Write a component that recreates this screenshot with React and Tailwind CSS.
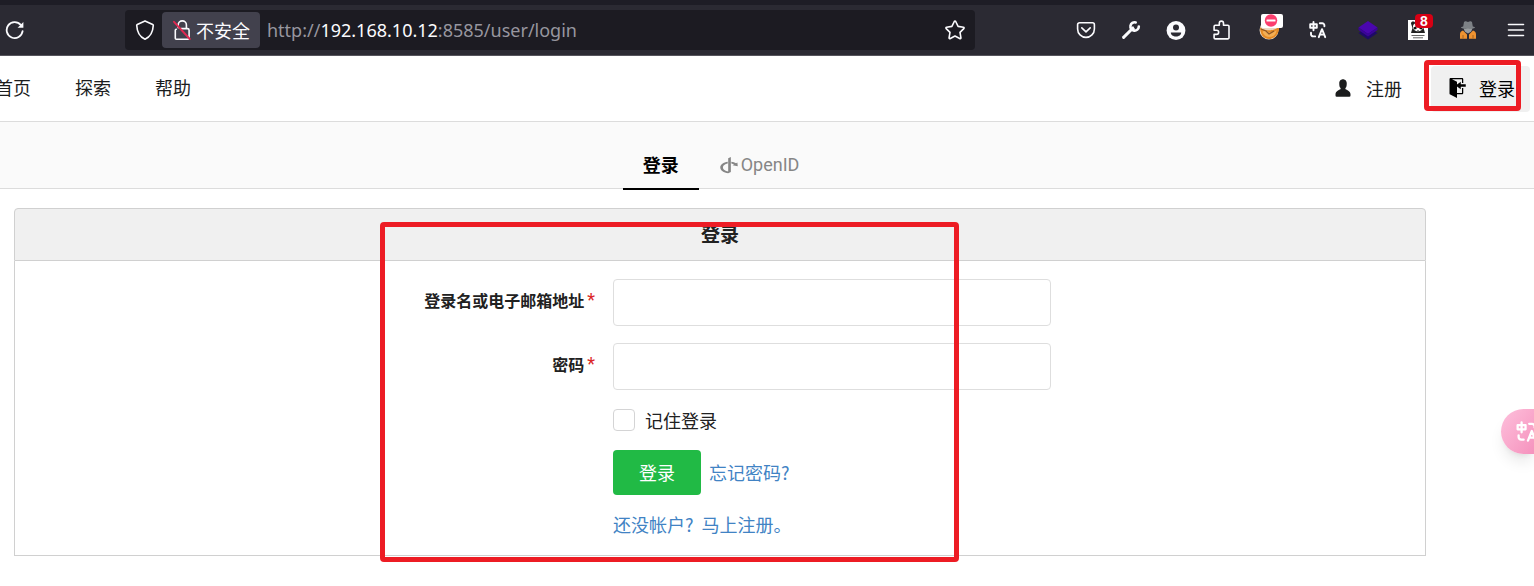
import React from "react";
import { FaOpenid } from "react-icons/fa";

const iconStroke = {
  fill: "none",
  stroke: "currentColor",
  strokeWidth: 1.6,
  strokeLinecap: "round",
  strokeLinejoin: "round",
};

function ReloadIcon() {
  return (
    <svg viewBox="0 0 20 20" className="size-5" {...iconStroke} strokeWidth="1.8">
      <path d="M17.6 11.2A8 8 0 1 1 15.8 4.9" />
      <path d="M18.4 2v5.8h-5.8z" fill="currentColor" stroke="none" />
    </svg>
  );
}

function ShieldIcon() {
  return (
    <svg viewBox="0 0 20 20" className="size-5 shrink-0" {...iconStroke}>
      <path d="M10 .9 17.7 4.4c.4.2.6.5.6.9C18 11.5 15.3 17 10 19.2 4.700 17 2 11.5 1.700 5.300c0-.4.2-.7.6-.9z" />
    </svg>
  );
}

function InsecureIcon() {
  return (
    <svg viewBox="0 0 20 22" className="h-[22px] w-5" {...iconStroke}>
      <path d="M6.200 8.800V6a4.100 4.100 0 0 1 8.200 0v3.200M4.300 10.200a1 1 0 0 0-1 1v8.100a1 1 0 0 0 1 1h11.800a1 1 0 0 0 1-1v-8.100a1.600 1.600 0 0 0-1.600-1.600H9" />
      <path d="M2 2.800 17.800 20" stroke="#e22850" strokeWidth="1.900" />
    </svg>
  );
}

function StarIcon() {
  return (
    <svg viewBox="0 0 20 20" className="size-5" {...iconStroke}>
      <path d="M9.300 1.500a.8.800 0 0 1 1.400 0l2.400 4.900 5.300.8c.7.1.9.9.4 1.400l-3.800 3.800.9 5.300c.1.700-.6 1.100-1.200.8L10 16l-4.700 2.500c-.6.300-1.300-.1-1.200-.8l.9-5.300-3.800-3.800c-.5-.5-.3-1.300.4-1.400l5.300-.8z" />
    </svg>
  );
}

function PocketIcon() {
  return (
    <svg viewBox="0 0 20 20" className="size-5" {...iconStroke}>
      <path d="M3.500 2.800h13a1.900 1.900 0 0 1 1.900 1.900V9a8.400 8.400 0 0 1-16.800 0V4.700a1.900 1.900 0 0 1 1.900-1.900z" />
      <path d="m5.800 7.800 4.200 4 4.200-4" />
    </svg>
  );
}

function WrenchIcon() {
  return (
    <svg viewBox="0 0 20 20" className="size-5" {...iconStroke}>
      <path d="M2.600 17.400 11 9" strokeWidth="3" />
      <path d="M14.700 2.400a4.200 4.200 0 1 0 3.100 4.200" strokeWidth="2.600" />
      <path d="m10 8 2-2 2 3-2 2z" fill="currentColor" stroke="none" />
    </svg>
  );
}

function AccountIcon() {
  return (
    <svg viewBox="0 0 20 20" className="size-5">
      <circle cx="10" cy="10.500" r="9.400" fill="currentColor" />
      <circle cx="10" cy="7.500" r="3" fill="#2b2a33" />
      <path d="M4.800 12.500h10.400c0 2.400-2.200 4-5.200 4s-5.200-1.600-5.200-4z" fill="#2b2a33" />
    </svg>
  );
}

function PuzzleIcon() {
  return (
    <svg viewBox="0 0 20 20" className="size-5" {...iconStroke}>
      <path d="M8.300 5.300V3.200a2.100 2.100 0 0 1 4.200 0v2.100h4.300a1.200 1.200 0 0 1 1.200 1.200v11.200a1.200 1.200 0 0 1-1.200 1.200H4.300a1.200 1.200 0 0 1-1.200-1.200v-3.300h2.500a2 2 0 0 0 0-4.100H3.100V6.500a1.200 1.200 0 0 1 1.200-1.200z" />
    </svg>
  );
}

function MonkeyIcon() {
  return (
    <svg viewBox="0 0 30 34" className="h-[34px] w-[30px]">
      <circle cx="16" cy="17" r="9.500" fill="#ead9c4" />
      <path d="M7 14c2 4 16 5 19-1 1 7-4 13-10 13S7 21 7 14z" fill="#e58a24" />
      <path d="M9.500 19c2-2 5-1 6 0s5 1 8-2c0 4-3 7-7 7-3 0-6-2-7-5z" fill="#f3ae54" />
      <path d="m8 16 5 2 3 3 5-3" fill="none" stroke="#8b5527" strokeWidth="1.300" />
      <rect x="8" y="1" width="22" height="14" rx="2" fill="#fff" />
      <circle cx="18" cy="7.500" r="6.200" fill="#fb3e6e" />
      <rect x="13.500" y="6.400" width="9" height="2.200" rx=".5" fill="#fff" />
    </svg>
  );
}

function TranslateIcon({ className }) {
  return (
    <svg viewBox="0 0 20 20" className={className} {...iconStroke} strokeWidth="1.900">
      <path d="M5.500 2v8.200M2.200 4.200h6.600v3.600H2.200zM11.800 3.200h2.400a2.200 2.200 0 0 1 2.200 2.200v.8M3 12.800v1.400a2.200 2.200 0 0 0 2.200 2.200h2" />
      <path d="m10.800 17.200 3.200-8 3.200 8M12 14.600h4" />
    </svg>
  );
}

function LayersIcon() {
  return (
    <svg viewBox="0 0 20 20" className="size-5">
      <path d="m10 7.500 9.500 5.500L10 19.500.5 13z" fill="#1e0a67" />
      <path d="m10 1 9.500 6.500L10 14 .5 7.500z" fill="#4a06ae" />
      <path d="M.5 7.500 10 14l9.500-6.500V10L10 16.500.5 10z" fill="#3b0399" />
    </svg>
  );
}

function PandaIcon() {
  return (
    <svg viewBox="0 0 20 20" className="size-5">
      <rect width="20" height="20" fill="#fff" />
      <path d="M3 3.500c0-3 4-2 4-1 2-1 4-1 6 0 2-2 5 0 4 2L15.500 8l1.500 5H3l1.500-5z" fill="#222" />
      <path d="M5 6c0-4 10-4 10 0 1 7-11 7-10 0z" fill="#fff" />
      <path d="m5.500 7.500 3-1.500v3l-2.500.5zm9 0-3-1.500v3l2.500.5zM9 10h2l-1 1z" fill="#111" />
      <path d="M3.500 15.500h13M5 17.800h10" stroke="#666" strokeWidth="1" />
    </svg>
  );
}

function SpyIcon() {
  return (
    <svg viewBox="0 0 20 20" className="size-5">
      <path d="M6 2c1.500-1.500 2.500 0 4 0s2.500-1.500 4 0l.8 4.500c1.500.3 2.200.6 2.200 1 0 .8-3 1.400-7 1.400s-7-.6-7-1.400c0-.4.7-.7 2.200-1z" fill="#7d8186" />
      <path d="M5.500 8.500h9l-1.500 3.300L10 13.500l-3-1.700z" fill="#9a9da0" />
      <path d="M5 10.500 9 14.500v4.200H2v-4.500c0-2 1.500-3.200 3-3.700zM15 10.500 11 14.500v4.200h7v-4.500c0-2-1.500-3.200-3-3.700z" fill="#f09330" />
      <path d="M5 15v3.500m10-3.500v3.500" stroke="#8f5a25" strokeWidth=".8" />
    </svg>
  );
}

function MenuIcon() {
  return (
    <svg viewBox="0 0 20 20" className="size-5" {...iconStroke}>
      <path d="M2.500 4.500h15M2.500 10h15M2.500 15.500h15" />
    </svg>
  );
}

function PersonIcon() {
  return (
    <svg viewBox="0 0 12 16" className="h-5 w-4" fill="currentColor">
      <path d="M12 14.002a.998.998 0 0 1-.998.998H1.001A1 1 0 0 1 0 13.999V13c0-2.633 4-4 4-4s.229-.409 0-1c-.841-.62-.944-1.590-1-4 .173-2.413 1.867-3 3-3s2.827.586 3 3c-.056 2.410-.159 3.380-1 4-.229.590 0 1 0 1s4 1.367 4 4v1.002z" />
    </svg>
  );
}

function SignInIcon() {
  return (
    <svg viewBox="0 0 14 16" className="h-5 w-[18px]" fill="currentColor">
      <path d="M7 6.750V12h4V8h1v4c0 .550-.450 1-1 1H7v3l-5.450-2.720c-.330-.170-.550-.520-.550-.910V1c0-.550.450-1 1-1h9c.550 0 1 .450 1 1v3h-1V1H3l4 2v2.250L10 3v2h4v2h-4v2L7 6.750z" />
    </svg>
  );
}

const browserItems = [
  { label: "Pocket", icon: <PocketIcon /> },
  { label: "开发者工具", icon: <WrenchIcon /> },
  { label: "账户", icon: <AccountIcon /> },
  { label: "扩展", icon: <PuzzleIcon /> },
];

const extensionItems = [
  { label: "代理", icon: <MonkeyIcon /> },
  { label: "翻译", icon: <TranslateIcon className="size-5" /> },
  { label: "图层", icon: <LayersIcon /> },
  { label: "脚本", icon: <PandaIcon />, badge: "8" },
  { label: "隐私", icon: <SpyIcon /> },
];

function BrowserBar() {
  return (
    <div className="flex h-14 items-center border-t-[5px] border-b border-t-[#1e1d26] border-b-[#55545c] bg-[#2b2a33] text-[#fbfbfe]">
      <button type="button" aria-label="重新加载" className="mr-[100px] ml-[5px] shrink-0">
        <ReloadIcon />
      </button>
      <div className="flex h-10 min-w-0 grow items-center rounded bg-[#1c1b22] px-[10px]">
        <ShieldIcon />
        <button type="button" className="ml-[7px] flex h-9 shrink-0 items-center gap-1 rounded bg-[#42414d] px-[10px] text-lg">
          <InsecureIcon />
          不安全
        </button>
        <div role="textbox" aria-label="地址" tabIndex={0} className="ml-[7px] min-w-0 grow truncate font-['Noto_Sans','Noto_Sans_CJK_SC',sans-serif] text-lg text-[#97969f]">
          http://<span className="text-[#fbfbfe]">192.168.10.12</span>:8585/user/login
        </div>
        <button type="button" aria-label="添加书签">
          <StarIcon />
        </button>
      </div>
      <div className="-mr-1 ml-[88px] flex shrink-0 items-center">
        {browserItems.map((item) => (
          <button key={item.label} type="button" aria-label={item.label} className="flex h-10 w-[45px] items-center justify-center">
            {item.icon}
          </button>
        ))}
        {extensionItems.map((item) => (
          <button key={item.label} type="button" aria-label={item.label} className="relative flex h-10 w-[50px] items-center justify-center">
            {item.icon}
            {item.badge && (
              <span className="absolute top-1 right-[10px] flex h-[14px] w-[18px] items-center justify-center rounded-sm bg-[#d70014] font-['Liberation_Sans',sans-serif] text-sm font-bold">
                {item.badge}
              </span>
            )}
          </button>
        ))}
        <button type="button" aria-label="菜单" className="flex h-10 w-[45px] items-center justify-center">
          <MenuIcon />
        </button>
      </div>
    </div>
  );
}

function SiteNav() {
  return (
    <nav className="flex h-[66px] items-center justify-between border-b border-[#dcdcdc] bg-white pr-1 text-lg text-[#1b1c1d]">
      <div className="-ml-[5px] flex gap-11 pb-[3px]">
        <a href="#home">首页</a>
        <a href="#explore">探索</a>
        <a href="#help">帮助</a>
      </div>
      <div className="flex items-center">
        <a href="#register" className="flex h-[46px] items-center gap-[15px] px-[15px] pb-[2px]">
          <PersonIcon />
          注册
        </a>
        <a href="#login" className="ml-[14px] flex h-[46px] items-center gap-[13px] rounded bg-[#f0f0f0] pr-[15px] pb-[2px] pl-[17px] text-black">
          <SignInIcon />
          登录
        </a>
      </div>
    </nav>
  );
}

function AuthTabs() {
  return (
    <div className="flex h-[67px] items-end justify-center border-b border-[#dcdcdc] bg-[#fafafa] pr-[92px] text-lg">
      <a href="#login" className="-mb-[2px] flex h-[50px] items-center border-b-2 border-black px-5 font-bold text-black">
        登录
      </a>
      <a href="#openid" className="-mb-[2px] flex h-[50px] items-center gap-[2px] border-b-2 border-transparent px-5 pt-[2px] font-['Roboto',sans-serif] text-[#868686]">
        <FaOpenid className="size-5" />
        OpenID
      </a>
    </div>
  );
}

function Field({ id, label, type }) {
  return (
    <div className="grid grid-cols-[598fr_438fr_374fr]">
      <label htmlFor={id} className="flex justify-end gap-[3px] pt-[9px] pr-[18px] text-base leading-6 font-bold">
        {label}
        <span className="font-['Roboto',sans-serif] text-lg leading-6 font-normal text-[#db2828]">*</span>
      </label>
      <input id={id} type={type} className="h-[47px] w-full min-w-0 rounded border border-[#dedede] bg-white px-4 text-lg outline-none focus:border-[#85b7d9]" />
    </div>
  );
}

function LoginPanel() {
  return (
    <main className="mt-[19px] mr-[108px] ml-[14px] text-[#212121]">
      <h1 className="flex h-[53px] items-center justify-center rounded-t border border-[#d0d0d0] bg-[#f0f0f0] text-[19px] font-bold">
        登录
      </h1>
      <form className="border border-t-0 border-[#d0d0d0] pt-[18px] pb-[17px]" onSubmit={(e) => e.preventDefault()}>
        <div className="flex flex-col gap-[17px]">
          <Field id="user_name" label="登录名或电子邮箱地址" type="text" />
          <Field id="password" label="密码" type="password" />
        </div>
        <div className="grid grid-cols-[598fr_812fr] text-lg">
          <div className="col-start-2 mt-4 flex h-7 items-center gap-[10px]">
            <input id="remember" type="checkbox" className="size-[22px] appearance-none rounded border border-[#d4d4d5] bg-white checked:bg-[#21ba45]" />
            <label htmlFor="remember">记住登录</label>
          </div>
          <div className="col-start-2 mt-4 flex items-center gap-2">
            <button type="submit" className="h-[45px] rounded bg-[#21ba45] px-[26px] pb-[2px] text-white">
              登录
            </button>
            <a href="#forgot" className="pb-[2px] text-[#4183c4]">
              忘记密码?
            </a>
          </div>
          <a href="#register" className="col-start-2 mt-[15px] justify-self-start text-[#4183c4]">
            还没帐户?&nbsp;&nbsp;马上注册。
          </a>
        </div>
      </form>
    </main>
  );
}

export default function App() {
  return (
    <div className="relative min-h-screen overflow-hidden bg-white font-['Noto_Sans_CJK_SC',sans-serif]">
      <BrowserBar />
      <SiteNav />
      <AuthTabs />
      <LoginPanel />
      <button type="button" aria-label="翻译页面" className="absolute top-[409px] right-0 h-[45px] w-[33px] overflow-hidden rounded-l-full bg-gradient-to-br from-[#fdc0dc] to-[#f592bd] pl-[14px] text-white shadow-lg">
        <TranslateIcon className="size-6 max-w-none" />
      </button>
      <div className="pointer-events-none absolute top-[222px] left-[380px] h-[340px] w-[579px] rounded-sm border-[5px] border-[#ed1c24]" />
      <div className="pointer-events-none absolute top-[60px] right-[13px] h-[51px] w-[97px] rounded-sm border-[5px] border-[#ed1c24]" />
    </div>
  );
}
